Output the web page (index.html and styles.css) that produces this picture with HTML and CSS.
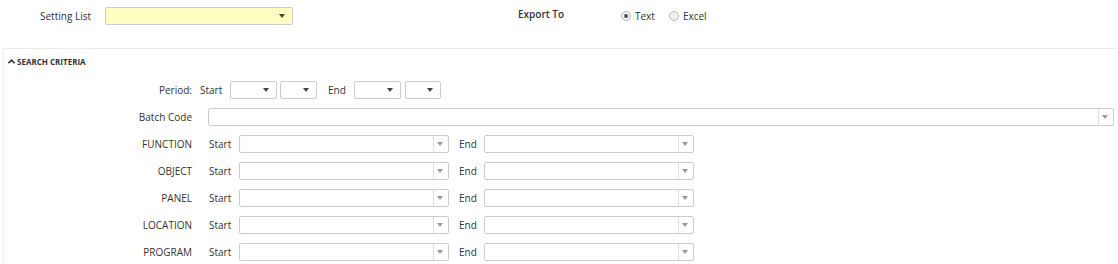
FILE: index.html
```
<!DOCTYPE html>
<html lang="en">
<head>
    <meta charset="UTF-8">
    <title>Report Settings</title>
    <link rel="stylesheet" href="styles.css">
</head>
<body>

    <div class="topbar">
        <label class="top-label">Setting List</label>
        <div class="pick pick-setting"><span class="arrow dark"></span></div>

        <label class="export-label">Export To</label>
        <div class="radios">
            <span class="radio checked"></span><span class="radio-text">Text</span>
            <span class="radio"></span><span class="radio-text">Excel</span>
        </div>
    </div>

    <div class="panel">
        <div class="panel-head">
            <svg class="caret" width="7" height="5" viewBox="0 0 7 5"><path d="M0.5 4.2 L3.5 1.2 L6.5 4.2" fill="none" stroke="#333" stroke-width="1.6"/></svg>
            SEARCH CRITERIA
        </div>

        <div class="rows">
            <div class="row">
                <span class="lbl">Period:</span>
                <span class="word word-period">Start</span>
                <div class="pick sm w47"><span class="arrow dark"></span></div>
                <div class="pick sm w37"><span class="arrow dark"></span></div>
                <span class="word word-end-period">End</span>
                <div class="pick sm2 w47"><span class="arrow dark"></span></div>
                <div class="pick w36"><span class="arrow dark"></span></div>
            </div>

            <div class="row">
                <span class="lbl">Batch Code</span>
                <div class="combo combo-wide"><span class="combo-btn"><span class="arrow light"></span></span></div>
            </div>

            <div class="row">
                <span class="lbl">FUNCTION</span>
                <span class="word word-start">Start</span>
                <div class="combo combo-start"><span class="combo-btn"><span class="arrow light"></span></span></div>
                <span class="word word-end">End</span>
                <div class="combo combo-end"><span class="combo-btn"><span class="arrow light"></span></span></div>
            </div>

            <div class="row">
                <span class="lbl">OBJECT</span>
                <span class="word word-start">Start</span>
                <div class="combo combo-start"><span class="combo-btn"><span class="arrow light"></span></span></div>
                <span class="word word-end">End</span>
                <div class="combo combo-end"><span class="combo-btn"><span class="arrow light"></span></span></div>
            </div>

            <div class="row">
                <span class="lbl">PANEL</span>
                <span class="word word-start">Start</span>
                <div class="combo combo-start"><span class="combo-btn"><span class="arrow light"></span></span></div>
                <span class="word word-end">End</span>
                <div class="combo combo-end"><span class="combo-btn"><span class="arrow light"></span></span></div>
            </div>

            <div class="row">
                <span class="lbl">LOCATION</span>
                <span class="word word-start">Start</span>
                <div class="combo combo-start"><span class="combo-btn"><span class="arrow light"></span></span></div>
                <span class="word word-end">End</span>
                <div class="combo combo-end"><span class="combo-btn"><span class="arrow light"></span></span></div>
            </div>

            <div class="row">
                <span class="lbl">PROGRAM</span>
                <span class="word word-start">Start</span>
                <div class="combo combo-start"><span class="combo-btn"><span class="arrow light"></span></span></div>
                <span class="word word-end">End</span>
                <div class="combo combo-end"><span class="combo-btn"><span class="arrow light"></span></span></div>
            </div>
        </div>
    </div>

</body>
</html>
```

FILE: styles.css
```
body {
    font-family: "Open Sans", Arial, sans-serif;
    font-size: 10px;
    color: #333;
    background: #fff;
    margin: 0;
}
.topbar {
    display: flex;
    align-items: center;
    height: 32px;
    padding-left: 40px;
}
.top-label {
    width: 65px;
}
.pick {
    position: relative;
    box-sizing: border-box;
    height: 18px;
    border: 1px solid #ccc;
    border-radius: 2px;
    background: #fff;
}
.pick-setting {
    width: 188px;
    background: #ffffc4;
    margin-top: -1px;
}
.arrow {
    position: absolute;
    top: 6px;
    right: 7px;
    width: 0;
    height: 0;
    border-left: 3px solid transparent;
    border-right: 3px solid transparent;
    border-top: 4px solid #444;
}
.arrow.light {
    border-top-color: #999;
    right: 5px;
}
.export-label {
    margin-left: 225px;
    width: 103px;
    font-weight: 600;
    margin-top: -4px;
}
.radios {
    display: flex;
    align-items: center;
}
.radio {
    position: relative;
    box-sizing: border-box;
    width: 10px;
    height: 10px;
    border: 1px solid #bbb;
    border-radius: 50%;
    background: #f0f0f0;
}
.radio.checked::after {
    content: "";
    position: absolute;
    top: 2px;
    left: 2px;
    width: 4px;
    height: 4px;
    border-radius: 50%;
    background: #555;
}
.radio-text {
    margin-left: 4px;
    margin-right: 14px;
}
.panel {
    margin: 16px 0 0 3px;
    border-top: 1px solid #eee;
    border-left: 1px solid #eee;
    height: 220px;
}
.panel-head {
    display: flex;
    align-items: center;
    height: 24px;
    padding-left: 4px;
    font-size: 8px;
    font-weight: 700;
}
.caret {
    margin-right: 2px;
}
.rows {
    display: flex;
    flex-direction: column;
    gap: 9px;
    padding-top: 8px;
}
.row {
    display: flex;
    align-items: center;
    height: 18px;
}
.lbl {
    width: 188px;
    text-align: right;
    flex-shrink: 0;
}
.word-period {
    margin-left: 8px;
    width: 30px;
}
.sm {
    margin-right: 3px;
}
.sm2 {
    margin-right: 4px;
}
.w47 { width: 47px; }
.w37 { width: 37px; }
.w36 { width: 36px; }
.word-end-period {
    margin-left: 8px;
    width: 26px;
}
.combo {
    position: relative;
    box-sizing: border-box;
    height: 18px;
    border: 1px solid #ccc;
    border-radius: 2px;
    background: #fff;
}
.combo-btn {
    position: absolute;
    top: 0;
    right: 0;
    bottom: 0;
    width: 14px;
    border-left: 1px solid #ddd;
}
.combo-wide {
    margin-left: 16px;
    width: 906px;
}
.word-start {
    margin-left: 17px;
    width: 30px;
}
.combo-start {
    width: 210px;
}
.word-end {
    margin-left: 10px;
    width: 25px;
}
.combo-end {
    width: 210px;
}
```
